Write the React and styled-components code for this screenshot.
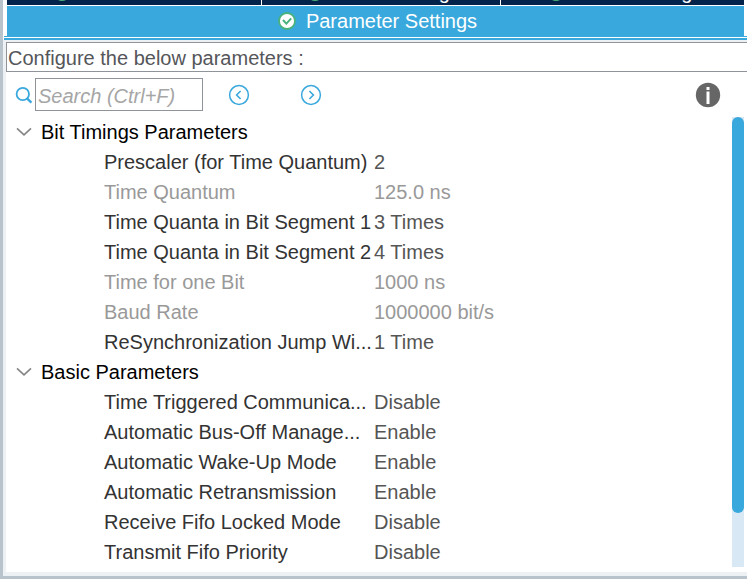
import React, { useState } from "react";
import styled, { createGlobalStyle } from "styled-components";

const Global = createGlobalStyle`
  * { box-sizing: border-box; }
  body { margin: 0; background: #fff; }
  body, button, input {
    font-family: "Liberation Sans", Arial, sans-serif;
    font-size: 20px;
    line-height: 24px;
  }
  button { padding: 0; border: 0; background: none; color: inherit; cursor: pointer; }
`;

const Frame = styled.main`
  border: solid #b8c3cb;
  border-width: 0 0 3px 3px;
  overflow: hidden;
`;

const ClippedTabs = styled.div`
  display: grid;
  grid-template-columns: 254fr 238fr 243fr;
  gap: 1px;
  align-content: end;
  height: 5px;
  margin: 0 3px 1px 4px;
  overflow: hidden;
`;

const Tab = styled.button`
  display: flex;
  align-items: center;
  justify-content: center;
  gap: 10px;
  width: 100%;
  height: ${(p) => (p.$active ? "30px" : "26px")};
  padding-left: 4px;
  color: #fff;
  background: ${(p) => (p.$active ? "#39a8dc" : "#03234b")};
`;

const ActiveTabs = styled.div`
  margin: 0 3px 0 4px;
`;

const TabRule = styled.div`
  height: 4px;
  margin-left: 1px;
  border: solid #39a8dc;
  border-width: 1px 0 2px;
`;

const Panel = styled.section`
  padding: 2px 0 4px 3px;
  background: #eef1f3;
`;

const Heading = styled.p`
  margin: 0;
  padding: 3px 1px;
  height: 30px;
  border: 1px solid #8f949b;
  border-right: 0;
  background: #fff;
  color: #55565a;
`;

const Content = styled.div`
  padding-bottom: 5px;
  background: #fff;
`;

const Toolbar = styled.div`
  display: flex;
  align-items: center;
  padding: 6px 26px 6px 9px;
`;

const SearchLabel = styled.label`
  display: flex;
  align-items: center;
  gap: 2px;
`;

const SearchInput = styled.input`
  width: 168px;
  height: 33px;
  padding: 4px 2px 1px;
  border: 1px solid #8f949b;
  border-radius: 0;
  font-style: italic;
  &::placeholder { color: #a6a6a6; opacity: 1; }
`;

const IconButton = styled.button`
  display: flex;
  margin-left: ${(p) => p.$gap};
`;

const TreeArea = styled.div`
  display: flex;
  padding-right: 3px;
`;

const Tree = styled.table`
  flex: 1;
  min-width: 0;
  border-collapse: collapse;
  table-layout: fixed;
  color: #333;
  th, td { padding: 0; height: 30px; text-align: left; font-weight: 400; white-space: nowrap; }
`;

const NameCol = styled.col`
  width: 368px;
`;

const GroupButton = styled.button`
  display: flex;
  align-items: center;
  gap: 9px;
  padding-left: 10px;
  color: #000;
`;

const Name = styled.th`
  && { padding-left: 98px; }
  color: ${(p) => (p.$readOnly ? "#999" : "#333")};
`;

const Value = styled.td`
  color: ${(p) => (p.$readOnly ? "#999" : "#555")};
`;

const ScrollTrack = styled.div`
  width: 12px;
  background: #d8e8f5;
`;

const ScrollThumb = styled.div`
  height: 88%;
  border-radius: 6px;
  background: #39a8dc;
`;

const CheckIcon = () => (
  <svg width="18" height="18" viewBox="0 0 18 18" aria-hidden="true">
    <circle cx="9" cy="9" r="8" fill="#fff" stroke="#49b27c" strokeWidth="1.8" />
    <path d="M5 8 8.4 11.6 13.2 6.4" fill="none" stroke="#49b27c" strokeWidth="2" />
  </svg>
);

const SearchIcon = () => (
  <svg width="18" height="18" viewBox="0 0 18 18" aria-hidden="true" fill="none" stroke="#39a8dc">
    <circle cx="7.8" cy="8" r="6.2" strokeWidth="1.8" />
    <path d="m12 12.4 4.4 4.2" strokeWidth="2.4" />
  </svg>
);

const ArrowIcon = ({ next }) => (
  <svg width="22" height="22" viewBox="0 0 22 22" aria-hidden="true" fill="none" stroke="#39a8dc">
    <circle cx="11" cy="11" r="9.4" strokeWidth="1.5" />
    <path d={next ? "m9.4 7 4 4-4 4" : "m12.6 7-4 4 4 4"} strokeWidth="1.6" />
  </svg>
);

const InfoIcon = () => (
  <svg width="26" height="26" viewBox="0 0 26 26" aria-hidden="true">
    <circle cx="13" cy="13" r="12.2" fill="#666" />
    <path d="M11.5 5h3v3h-3zM11.5 9.5h3v12.5h-3z" fill="#fff" />
  </svg>
);

const Chevron = () => (
  <svg width="16" height="10" viewBox="0 0 16 10" aria-hidden="true">
    <path d="m1 1.4 7 6.4 7-6.4" fill="none" stroke="#858585" strokeWidth="1.6" />
  </svg>
);

const groups = [
  {
    title: "Bit Timings Parameters",
    rows: [
      ["Prescaler (for Time Quantum)", "2"],
      ["Time Quantum", "125.0 ns", true],
      ["Time Quanta in Bit Segment 1", "3 Times"],
      ["Time Quanta in Bit Segment 2", "4 Times"],
      ["Time for one Bit", "1000 ns", true],
      ["Baud Rate", "1000000 bit/s", true],
      ["ReSynchronization Jump Wi...", "1 Time"],
    ],
  },
  {
    title: "Basic Parameters",
    rows: [
      ["Time Triggered Communica...", "Disable"],
      ["Automatic Bus-Off Manage...", "Enable"],
      ["Automatic Wake-Up Mode", "Enable"],
      ["Automatic Retransmission", "Enable"],
      ["Receive Fifo Locked Mode", "Disable"],
      ["Transmit Fifo Priority", "Disable"],
    ],
  },
];

function Group({ title, rows }) {
  const [open, setOpen] = useState(true);
  return (
    <tbody>
      <tr>
        <th colSpan={2} scope="rowgroup">
          <GroupButton type="button" aria-expanded={open} onClick={() => setOpen(!open)}>
            <Chevron />
            {title}
          </GroupButton>
        </th>
      </tr>
      {open &&
        rows.map(([name, value, readOnly]) => (
          <tr key={name}>
            <Name scope="row" $readOnly={readOnly}>{name}</Name>
            <Value $readOnly={readOnly}>{value}</Value>
          </tr>
        ))}
    </tbody>
  );
}

export default function App() {
  return (
    <>
      <Global />
      <Frame>
        <ClippedTabs>
          {["User Constants", "NVIC Settings", "GPIO Settings"].map((t) => (
            <Tab key={t} type="button"><CheckIcon />{t}</Tab>
          ))}
        </ClippedTabs>
        <ActiveTabs>
          <Tab type="button" $active><CheckIcon />Parameter Settings</Tab>
        </ActiveTabs>
        <TabRule />
        <Panel>
          <Heading>Configure the below parameters :</Heading>
          <Content>
            <Toolbar>
              <SearchLabel>
                <SearchIcon />
                <SearchInput type="text" placeholder="Search (Ctrl+F)" aria-label="Search" />
              </SearchLabel>
              <IconButton type="button" aria-label="Previous" $gap="25px"><ArrowIcon /></IconButton>
              <IconButton type="button" aria-label="Next" $gap="50px"><ArrowIcon next /></IconButton>
              <IconButton type="button" aria-label="Information" $gap="auto"><InfoIcon /></IconButton>
            </Toolbar>
            <TreeArea>
              <Tree>
                <colgroup><NameCol /><col /></colgroup>
                {groups.map((g) => <Group key={g.title} {...g} />)}
              </Tree>
              <ScrollTrack><ScrollThumb /></ScrollTrack>
            </TreeArea>
          </Content>
        </Panel>
      </Frame>
    </>
  );
}
